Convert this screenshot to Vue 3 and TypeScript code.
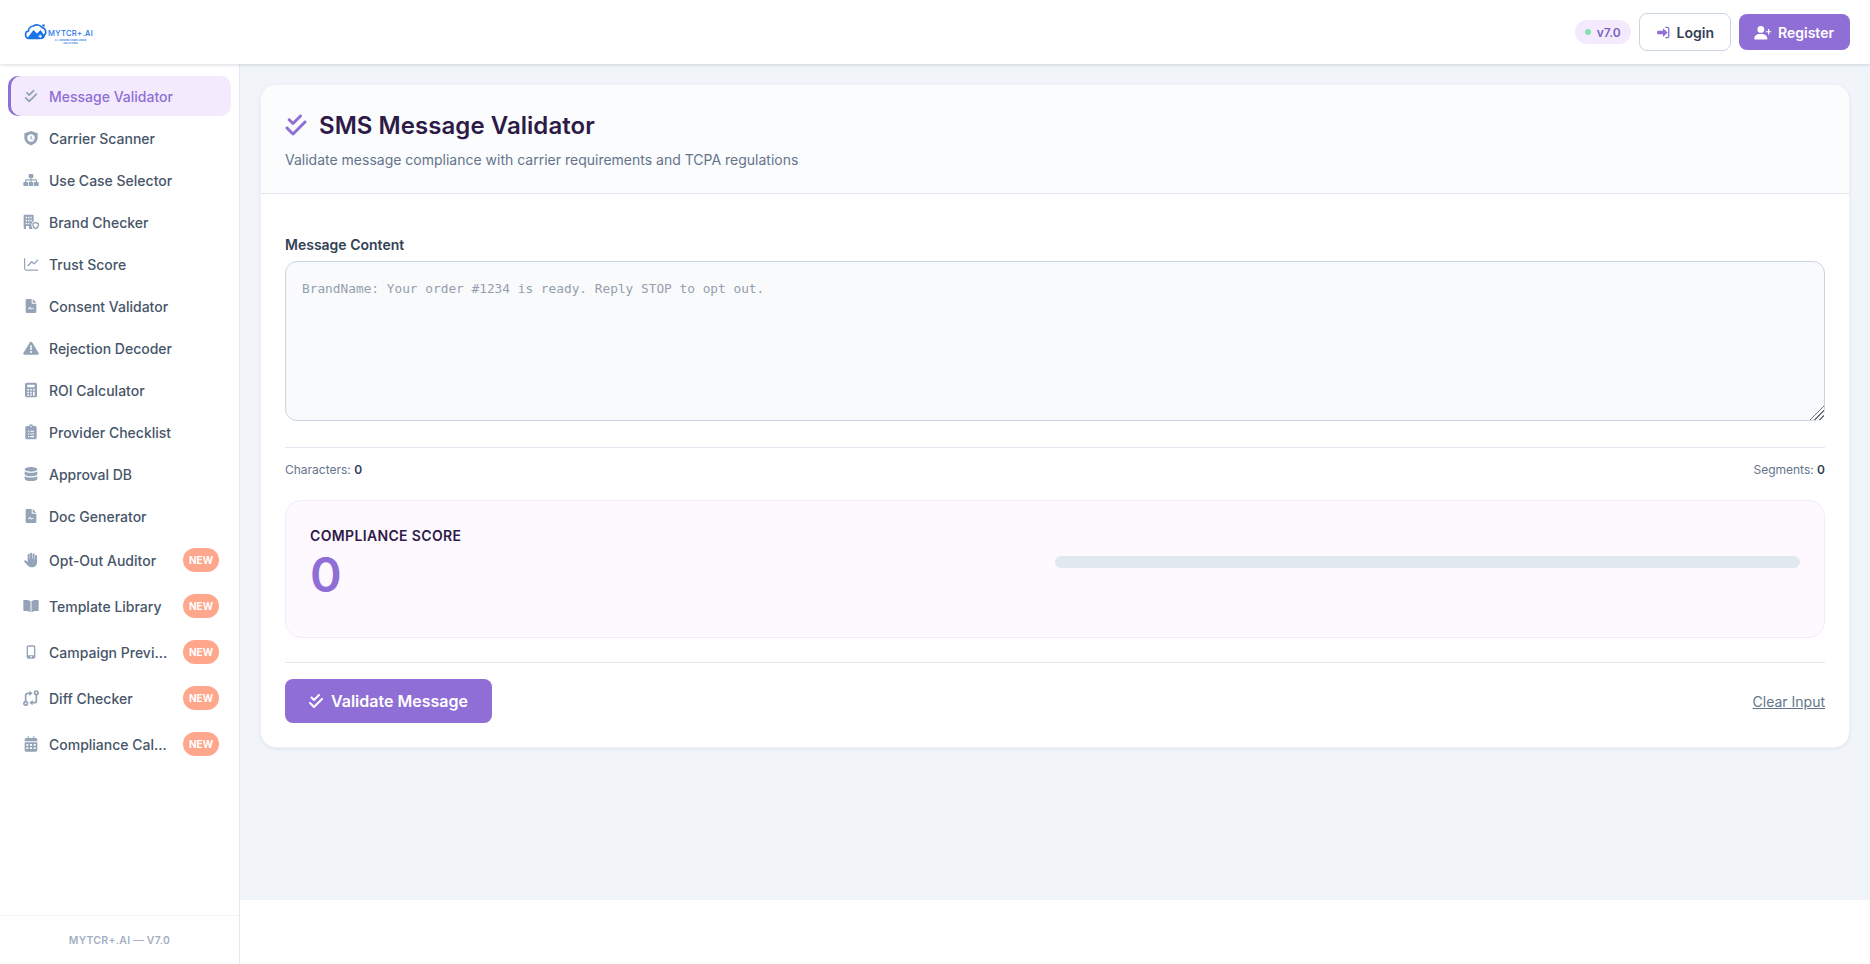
<script setup lang="ts">
interface Icon { vb: string; paths: string[]; strokes?: string[] }

const checkPath = 'M342.6 86.6c12.5-12.5 12.5-32.8 0-45.3s-32.8-12.5-45.3 0L160 178.7l-57.4-57.4c-12.5-12.5-32.8-12.5-45.3 0s-12.5 32.8 0 45.3l80 80c12.5 12.5 32.8 12.5 45.3 0l160-160zm96 128c12.5-12.5 12.5-32.8 0-45.3s-32.8-12.5-45.3 0L160 402.7 54.6 297.4c-12.5-12.5-32.8-12.5-45.3 0s-12.5 32.8 0 45.3l128 128c12.5 12.5 32.8 12.5 45.3 0l256-256z'
const check: Icon = { vb: '0 0 448 512', paths: [checkPath] }
const doc: Icon = {
  vb: '0 0 24 24',
  paths: ['M6.5 1.500H13v6a1 1 0 0 0 1 1h6V20.500a2 2 0 0 1-2 2H6a2 2 0 0 1-2-2v-17a2 2 0 0 1 2-2zM7.5 15.2v1.300h2.200l1-1.600 1.600 2.600 1.200-1h2.900v-1.300h-3.300l-.6.5-1.900-3-1.600 2.500z', 'M14.500 1.500 20 7h-5.500z'],
}

const icons: Record<string, Icon> = {
  check: { vb: '-32 -32 512 576', paths: [checkPath] },
  shield: { vb: '0 0 24 24', paths: ['M12 1.500 22 5v6.500c0 5-3.800 9-10 11.500C5.800 20.500 2 16.500 2 11.500V5zM12 6.500a5.500 5.500 0 1 0 0 11 5.500 5.500 0 0 0 0-11zM11.200 9h1.600v3.200l2 1.200-.8 1.300-2.800-1.700z'] },
  sitemap: { vb: '0 0 24 24', paths: ['M9.500 3h5a1 1 0 0 1 1 1v4a1 1 0 0 1-1 1h-1.700v2h6.200a2 2 0 0 1 2 2v2h-1.600v-2a.4.4 0 0 0-.4-.4h-6.200V15h-1.600v-2.400H5a.4.4 0 0 0-.4.4v2H3v-2a2 2 0 0 1 2-2h6.200V9H9.500a1 1 0 0 1-1-1V4a1 1 0 0 1 1-1z', 'M1.500 15h5a1 1 0 0 1 1 1v4a1 1 0 0 1-1 1h-5a1 1 0 0 1-1-1v-4a1 1 0 0 1 1-1zM9.500 15h5a1 1 0 0 1 1 1v4a1 1 0 0 1-1 1h-5a1 1 0 0 1-1-1v-4a1 1 0 0 1 1-1zM17.500 15h5a1 1 0 0 1 1 1v4a1 1 0 0 1-1 1h-5a1 1 0 0 1-1-1v-4a1 1 0 0 1 1-1z'] },
  building: { vb: '0 0 24 24', paths: ['M2.500 1h12A1.500 1.500 0 0 1 16 2.500V11a5 5 0 0 0-3.500 4.500c0 3 .8 5 2.300 7H2.500A1.500 1.500 0 0 1 1 21V2.500A1.500 1.500 0 0 1 2.500 1zM4 4v2.200h2V4zM7.500 4v2.200h2V4zM11 4v2.200h2V4zM4 8.500v2.200h2V8.500zM7.500 8.500v2.200h2V8.500zM11 8.500v2.200h2V8.500zM4 13v2.200h2V13zM7.500 13v2.200h2V13zM4.500 22.500H9V18H4.500z', 'M19 11.500l5 1.900v3c0 3-2 5.300-5 6.600-3-1.300-5-3.600-5-6.600v-3zM19 13.800l-3 1.100v1.500c0 1.800 1.100 3.200 3 4.200 1.900-1 3-2.400 3-4.200v-1.500z'] },
  chart: { vb: '0 0 24 24', paths: ['M1.500 3.500h1.800V19a1.300 1.300 0 0 0 1.300 1.300h18v1.700h-18a3.100 3.100 0 0 1-3.100-3.100z', 'M21.800 5l1.400 1.400-6.400 6.800-3.600-3.200-5.400 5.600-1.400-1.400 6.700-7 3.600 3.200z'] },
  doc,
  warn: { vb: '0 0 24 24', paths: ['M12 2.500c.7 0 1.300.4 1.700 1l9.700 16c.8 1.300-.2 2.500-1.700 2.500H2.300C.8 22-.2 20.800.6 19.500L10.300 3.500c.4-.6 1-1 1.700-1zM10.900 8v7h2.200V8zM12 16.500a1.500 1.500 0 1 0 0 3 1.500 1.500 0 0 0 0-3z'] },
  calc: { vb: '0 0 24 24', paths: ['M5.500 1h13a2.500 2.500 0 0 1 2.500 2.500v17a2.500 2.500 0 0 1-2.500 2.500h-13A2.500 2.500 0 0 1 3 20.500v-17A2.500 2.500 0 0 1 5.500 1zM6.500 4v4h11V4zM6.500 10.500v2.300h2.500v-2.300zM10.800 10.500v2.300h2.400v-2.300zM15 10.500v2.300h2.500v-2.300zM6.500 14.500v2.300h2.500v-2.300zM10.800 14.500v2.300h2.400v-2.300zM15 14.500v6h2.500v-6zM6.500 18.300v2.300h2.500v-2.300zM10.800 18.300v2.300h2.400v-2.300z'] },
  clipboard: { vb: '0 0 24 24', paths: ['M12 .5a3.500 3.500 0 0 1 3.300 2.500H18a2.500 2.500 0 0 1 2.500 2.500v15A2.500 2.500 0 0 1 18 23H6a2.500 2.500 0 0 1-2.500-2.500v-15A2.500 2.500 0 0 1 6 3h2.700A3.500 3.500 0 0 1 12 .5zM12 2.700a1.100 1.100 0 1 0 0 2.200 1.100 1.100 0 0 0 0-2.200zM7.500 10v1.800h1.800V10zM11 10.100v1.600h5.500v-1.600zM7.500 14v1.800h1.800V14zM11 14.100v1.600h5.500v-1.600zM7.500 18v1.800h1.800V18zM11 18.100v1.600h5.500v-1.600z'] },
  db: { vb: '0 0 24 24', paths: ['M12 1.500c5.200 0 9.500 1.600 9.500 3.500s-4.300 3.500-9.500 3.500S2.500 6.900 2.500 5 6.800 1.500 12 1.500zM2.500 8c2 1.500 5.500 2.300 9.500 2.300S19.500 9.500 21.500 8v4c0 1.900-4.300 3.500-9.500 3.500S2.500 13.900 2.500 12zM2.500 15c2 1.500 5.500 2.300 9.500 2.300s7.500-.8 9.500-2.300v4c0 1.900-4.300 3.500-9.500 3.500S2.500 20.900 2.500 19z'] },
  hand: { vb: '0 0 24 24', paths: ['M12 1a1.500 1.500 0 0 1 1.500 1.500V10h.8V3.500a1.500 1.500 0 0 1 3 0V11h.7V6a1.500 1.500 0 0 1 3 0v9.500c0 4.500-3 7.500-7.500 7.500-3 0-5-1-6.700-3.200L2 14.500c-1-1.500 1.200-3 2.500-1.700l2 2.200H7V4a1.500 1.500 0 0 1 3 0v6h.5V2.500A1.500 1.500 0 0 1 12 1z'] },
  book: { vb: '0 0 24 24', paths: ['M11.300 5v16.500C9.300 20 6.500 19.500 3.500 19.500H1.500A1 1 0 0 1 .5 18.500V4a1 1 0 0 1 1-1H4c3 0 5.800.7 7.300 2zM12.700 5c1.500-1.300 4.300-2 7.300-2h2.500a1 1 0 0 1 1 1v14.500a1 1 0 0 1-1 1H20.500c-3 0-5.800.5-7.800 2z'] },
  mobile: { vb: '0 0 24 24', paths: ['M8 2h8a2.500 2.500 0 0 1 2.500 2.500v15A2.500 2.500 0 0 1 16 22H8a2.500 2.500 0 0 1-2.500-2.500v-15A2.500 2.500 0 0 1 8 2zM8 4.200a.5.500 0 0 0-.5.500V17h9V4.700a.5.500 0 0 0-.5-.5zM12 18a1.300 1.300 0 1 0 0 2.600 1.300 1.300 0 0 0 0-2.600z'] },
  compare: {
    vb: '0 0 24 24',
    paths: ['M9.500 1v8l5-4zM14.500 15v8l-5-4z'],
    strokes: ['M4 17V8a3 3 0 0 1 3-3h4', 'M20 7v9a3 3 0 0 1-3 3h-4', 'M4 17.500a2.600 2.600 0 1 0 0 5.200 2.600 2.600 0 0 0 0-5.200z', 'M20 1.500a2.600 2.600 0 1 0 0 5.200 2.600 2.600 0 0 0 0-5.200z'],
  },
  calendar: { vb: '0 0 24 24', paths: ['M7 .5h1.800V3h6.400V.5H17V3h2a2.500 2.500 0 0 1 2.500 2.500V8h-19V5.500A2.500 2.500 0 0 1 5 3h2z', 'M2.500 9.500h19V21a2.500 2.500 0 0 1-2.500 2.500H5A2.500 2.500 0 0 1 2.500 21zM5 12v2.500h3V12zM10.500 12v2.500h3V12zM16 12v2.500h3V12zM5 17v2.500h3V17zM10.500 17v2.500h3V17zM16 17v2.500h3V17z'] },
  login: { vb: '0 0 24 24', paths: ['M12 4.500 20 12l-8 7.500V15H3.500A1.500 1.500 0 0 1 2 13.500v-3A1.500 1.500 0 0 1 3.500 9H12z', 'M16 2h3.500A3.500 3.500 0 0 1 23 5.500v13a3.500 3.500 0 0 1-3.500 3.500H16v-2.300h3.500a1.200 1.200 0 0 0 1.200-1.200v-13a1.200 1.200 0 0 0-1.200-1.200H16z'] },
  userplus: { vb: '0 0 28 24', paths: ['M10.500 1.500a5.500 5.500 0 1 1 0 11 5.500 5.500 0 0 1 0-11zM8.200 14.500h4.600c4.500 0 8.200 3.500 8.200 7.300 0 .7-.5 1.200-1.200 1.200H1.200C.5 23 0 22.500 0 21.800c0-3.800 3.700-7.300 8.200-7.300z', 'M22 6.500h1.900v3.300h3.300v1.900h-3.300V15H22v-3.300h-3.300V9.800H22z'] },
}

interface NavItem { label: string; icon: string; active?: boolean; isNew?: boolean }

const nav: NavItem[] = [
  { label: 'Message Validator', icon: 'check', active: true },
  { label: 'Carrier Scanner', icon: 'shield' },
  { label: 'Use Case Selector', icon: 'sitemap' },
  { label: 'Brand Checker', icon: 'building' },
  { label: 'Trust Score', icon: 'chart' },
  { label: 'Consent Validator', icon: 'doc' },
  { label: 'Rejection Decoder', icon: 'warn' },
  { label: 'ROI Calculator', icon: 'calc' },
  { label: 'Provider Checklist', icon: 'clipboard' },
  { label: 'Approval DB', icon: 'db' },
  { label: 'Doc Generator', icon: 'doc' },
  { label: 'Opt-Out Auditor', icon: 'hand', isNew: true },
  { label: 'Template Library', icon: 'book', isNew: true },
  { label: 'Campaign Preview', icon: 'mobile', isNew: true },
  { label: 'Diff Checker', icon: 'compare', isNew: true },
  { label: 'Compliance Calendar', icon: 'calendar', isNew: true },
]
</script>

<template>
  <div class="app">
    <header class="topbar">
      <div class="logo">
        <svg class="logo-mark" viewBox="0 0 24 18" width="24" height="18" aria-hidden="true">
          <path fill="none" stroke="#1a73e8" stroke-width="1.600" d="M5 15.500a3.800 3.800 0 0 1-.5-7.500 5 5 0 0 1 5-5 6 6 0 0 1 8.500 1.500 4.500 4.500 0 0 1 2 8c-.6 1.500-2 3-4 3z" />
          <path fill="#1a73e8" d="M3 15.500 9.500 7l3.500 3.500 3.500-3.500 4.500 6.500c-.8 1.500-2 2.500-4 2.500H5z" />
          <circle cx="19.500" cy="2.500" r="1.300" fill="#1a73e8" />
          <path fill="#fff" d="M15.700 11.500h1v1.300H18v1h-1.300v1.300h-1v-1.300h-1.300v-1h1.300z" />
        </svg>
        <div class="logo-text">
          <span class="logo-name">MYTCR+.AI</span>
          <span class="logo-tag">A.I. DRIVEN COMPLIANCE</span>
          <span class="logo-tag">SOLUTIONS</span>
        </div>
      </div>
      <div class="top-actions">
        <span class="version"><i class="dot"></i>v7.0</span>
        <button class="btn-login" type="button">
          <svg class="top-icon" :viewBox="icons.login.vb"><path v-for="d in icons.login.paths" :key="d" :d="d" fill-rule="evenodd" /></svg>
          Login
        </button>
        <button class="btn-register" type="button">
          <svg class="top-icon wide" :viewBox="icons.userplus.vb"><path v-for="d in icons.userplus.paths" :key="d" :d="d" fill-rule="evenodd" /></svg>
          Register
        </button>
      </div>
    </header>

    <div class="shell">
      <aside class="sidebar">
        <nav class="nav">
          <a v-for="item in nav" :key="item.label" class="nav-item" :class="{ active: item.active }">
            <svg class="nav-icon" :viewBox="icons[item.icon].vb">
              <path v-for="d in icons[item.icon].paths" :key="d" :d="d" fill-rule="evenodd" />
              <path v-for="d in icons[item.icon].strokes ?? []" :key="d" :d="d" class="stroke" />
            </svg>
            <span class="nav-label">{{ item.label }}</span>
            <span v-if="item.isNew" class="badge">NEW</span>
          </a>
        </nav>
        <div class="side-foot">MYTCR+.AI — V7.0</div>
      </aside>

      <div class="content">
        <main class="main">
          <section class="card">
            <div class="card-head">
              <h1 class="title">
                <svg class="title-icon" :viewBox="check.vb"><path :d="check.paths[0]" /></svg>
                SMS Message Validator
              </h1>
              <p class="subtitle">Validate message compliance with carrier requirements and TCPA regulations</p>
            </div>
            <div class="card-body">
              <label class="field-label" for="msg">Message Content</label>
              <textarea id="msg" class="msg" placeholder="BrandName: Your order #1234 is ready. Reply STOP to opt out."></textarea>
              <div class="stats">
                <span>Characters: <b>0</b></span>
                <span>Segments: <b>0</b></span>
              </div>
              <div class="score">
                <div class="score-grid">
                  <div>
                    <div class="score-label">COMPLIANCE SCORE</div>
                    <div class="score-value">0</div>
                  </div>
                  <div class="bar"></div>
                </div>
              </div>
              <div class="actions">
                <button class="btn-validate" type="button">
                  <svg class="btn-icon" :viewBox="check.vb"><path :d="check.paths[0]" /></svg>
                  Validate Message
                </button>
                <a class="clear">Clear Input</a>
              </div>
            </div>
          </section>
        </main>
      </div>
    </div>
  </div>
</template>

<style>
html, body { margin: 0; background: #fff; }
</style>

<style scoped>
.app {
  height: 100vh;
  display: flex;
  flex-direction: column;
  font-family: Inter, "Liberation Sans", sans-serif;
  color: #334155;
  overflow: hidden;
}
.topbar {
  height: 64px;
  flex: none;
  box-sizing: border-box;
  display: flex;
  align-items: center;
  justify-content: space-between;
  padding: 0 20px 0 24px;
  background: #fff;
  box-shadow: 0 1px 3px rgba(100, 116, 139, 0.25);
  position: relative;
  z-index: 2;
}
.logo { display: flex; align-items: center; height: 22px; }
.logo-mark { flex: none; }
.logo-text { display: flex; flex-direction: column; align-items: center; line-height: 1; margin-top: 12px; }
.logo-name { font-size: 7.600px; font-weight: 500; letter-spacing: 0.3px; color: #1a73e8; line-height: 8.500px; }
.logo-tag { font-size: 2.500px; font-weight: 600; color: #1a73e8; line-height: 3.400px; }
.top-actions { display: flex; align-items: center; gap: 8px; }
.version {
  display: inline-flex;
  align-items: center;
  gap: 6px;
  height: 24px;
  padding: 0 10px;
  border-radius: 12px;
  background: #f3ebfd;
  color: #7e5fc4;
  font-size: 12px;
  font-weight: 600;
}
.dot { width: 6px; height: 6px; border-radius: 50%; background: #86e0ae; }
.btn-login, .btn-register {
  display: inline-flex;
  align-items: center;
  gap: 7px;
  border-radius: 8px;
  font-family: inherit;
  font-size: 14px;
  font-weight: 600;
}
.btn-login {
  height: 38px;
  padding: 0 16px;
  background: #fff;
  border: 1px solid #cbd5e1;
  color: #334155;
}
.btn-register {
  height: 36px;
  padding: 0 16px 0 15px;
  gap: 6px;
  background: #8f6ed5;
  border: 0;
  color: #fff;
}
.top-icon { width: 14px; height: 15px; fill: #8f6ed5; flex: none; }
.btn-register .top-icon { fill: #fff; }
.top-icon.wide { width: 18px; }

.shell { flex: 1; min-height: 0; display: flex; }
.sidebar {
  width: 240px;
  flex: none;
  box-sizing: border-box;
  border-right: 1px solid #e2e8f0;
  display: flex;
  flex-direction: column;
  background: #fff;
}
.nav {
  flex: 1;
  display: flex;
  flex-direction: column;
  gap: 2px;
  padding: 12px 8px 0;
}
.nav-item {
  display: flex;
  align-items: center;
  padding: 10px 12px 10px 16px;
  border-radius: 10px;
  color: #475569;
  font-size: 14px;
  font-weight: 500;
  line-height: 20px;
}
.nav-item.active {
  background: #f3ebfd;
  color: #8f6ed5;
  box-shadow: inset 3px 0 0 #8f6ed5;
}
.nav-icon { width: 16px; height: 16px; flex: none; margin-right: 10px; margin-left: -1px; fill: #94a3b8; }
.stroke { fill: none; stroke: #94a3b8; stroke-width: 2.600; }
.nav-label {
  flex: 1;
  min-width: 0;
  padding-top: 1px;
  line-height: 19px;
  white-space: nowrap;
  overflow: hidden;
  text-overflow: ellipsis;
}
.badge {
  flex: none;
  margin-left: 12px;
  width: 36px;
  height: 24px;
  border-radius: 12px;
  background: #ffa78c;
  color: #fff;
  font-size: 10px;
  font-weight: 700;
  line-height: 24px;
  text-align: center;
}
.side-foot {
  height: 49px;
  box-sizing: border-box;
  border-top: 1px solid #f1f5f9;
  display: flex;
  align-items: center;
  justify-content: center;
  color: #a3afc2;
  font-size: 10.400px;
  font-weight: 600;
  letter-spacing: 0.3px;
}

.content { flex: 1; min-width: 0; }
.main {
  height: 836px;
  box-sizing: border-box;
  padding: 20px;
  background: #f1f4f9;
}
.card {
  background: #fff;
  border: 1px solid #eef2f7;
  border-radius: 16px;
  box-shadow: 0 1px 3px rgba(100, 116, 139, 0.12);
  overflow: hidden;
}
.card-head {
  height: 109px;
  box-sizing: border-box;
  padding: 23px 24px 0;
  background: #fbfcfe;
  border-bottom: 1px solid #e2e8f0;
}
.title {
  margin: 0;
  display: flex;
  align-items: center;
  gap: 12px;
  height: 34px;
  font-size: 24px;
  font-weight: 600;
  letter-spacing: 0.05px;
  color: #2e1a47;
}
.title-icon { width: 22px; height: 24px; fill: #8f6ed5; flex: none; }
.subtitle { margin: 7px 0 0; font-size: 14px; line-height: 21px; color: #64748b; }
.card-body { padding: 40px 24px 24px; }
.field-label {
  display: block;
  margin-bottom: 6px;
  font-size: 14px;
  font-weight: 600;
  line-height: 21px;
  color: #334155;
}
.msg {
  display: block;
  width: 100%;
  height: 160px;
  box-sizing: border-box;
  padding: 17px 16px 15px;
  background: #f8fafc;
  border: 1px solid #cbd5e1;
  border-radius: 12px;
  font-family: "DejaVu Sans Mono", monospace;
  font-size: 12.800px;
  line-height: 19px;
  color: #334155;
  outline: none;
}
.msg::placeholder { color: #969fae; opacity: 1; }
.msg::-webkit-resizer {
  background:
    linear-gradient(135deg, #f8fafc 50%, transparent 50%),
    repeating-linear-gradient(135deg, #6f7379 0 1.500px, #f8fafc 1.500px 3.500px);
}
.stats {
  margin-top: 26px;
  padding-top: 13px;
  border-top: 1px solid #e2e8f0;
  display: flex;
  justify-content: space-between;
  font-size: 12px;
  line-height: 18px;
  color: #64748b;
}
.stats b { color: #334155; font-weight: 600; }
.score {
  margin-top: 21px;
  box-sizing: border-box;
  height: 138px;
  padding: 24px;
  background: #fdf9ff;
  border: 1px solid #f3ebfd;
  border-radius: 16px;
}
.score-grid { display: grid; grid-template-columns: 1fr 1fr; align-items: center; }
.score-label {
  font-size: 14px;
  font-weight: 600;
  line-height: 22px;
  letter-spacing: 0.35px;
  color: #2e1a47;
}
.score-value {
  margin-top: 4px;
  font-size: 48px;
  font-weight: 600;
  line-height: 48px;
  color: #8f6ed5;
}
.bar { height: 12px; border-radius: 6px; background: #e2e8f0; }
.actions {
  margin-top: 24px;
  padding-top: 16px;
  border-top: 1px solid #e2e8f0;
  display: flex;
  align-items: center;
  justify-content: space-between;
}
.btn-validate {
  display: inline-flex;
  align-items: center;
  gap: 8px;
  height: 44px;
  padding: 0 24px;
  background: #8f6ed5;
  border: 0;
  border-radius: 8px;
  color: #fff;
  font-family: inherit;
  font-size: 16px;
  font-weight: 600;
}
.btn-icon { width: 14px; height: 16px; fill: #fff; flex: none; }
.clear { font-size: 14px; color: #64748b; text-decoration: underline; }
</style>
